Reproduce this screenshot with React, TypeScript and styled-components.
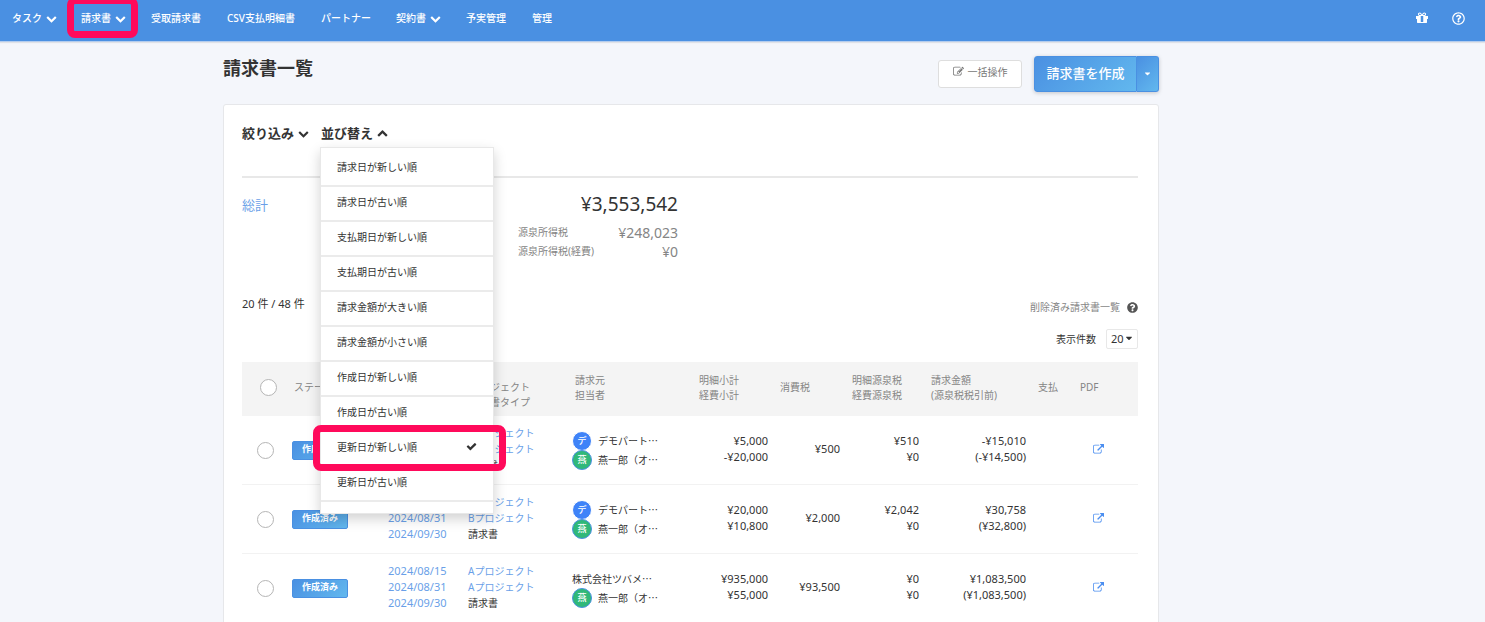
import React from "react";
import styled, { createGlobalStyle } from "styled-components";
import { FaCaretDown, FaQuestionCircle, FaRegQuestionCircle } from "react-icons/fa";

const color = {
  brand: "#4a90e2",
  brandLight: "#62b8ee",
  link: "#6a9fe8",
  text: "#333333",
  muted: "#858585",
  line: "#e8e8e8",
  rowLine: "#f2f2f2",
  page: "#f4f6fb",
  marker: "#ff0a5b",
};

const GlobalStyle = createGlobalStyle`
  *, *::before, *::after { box-sizing: border-box; }
  body {
    margin: 0;
    background: ${color.page};
    color: ${color.text};
    font-family: "Noto Sans", "Noto Sans CJK JP", sans-serif;
    font-size: 10px;
    line-height: 16px;
  }
  button, select { font-family: inherit; }
  a { text-decoration: none; }
  svg { display: block; flex: none; }
`;

const Shell = styled.div`
  display: flex;
  flex-direction: column;
  height: 100vh;
`;

const TopNav = styled.nav`
  display: flex;
  flex: none;
  justify-content: space-between;
  height: 42px;
  padding-bottom: 5px;
  background: ${color.brand};
  border-bottom: 1px solid #b4cdee;
  box-shadow: 0 1px 1px rgba(0, 0, 0, 0.08);
`;

const NavGroup = styled.div`
  display: flex;
  align-items: center;
`;

const NavUtilities = styled(NavGroup)`
  gap: 23px;
  padding-right: 20px;
`;

const NavMenuButton = styled.button`
  position: relative;
  display: flex;
  align-items: center;
  gap: 4px;
  padding: 0 12px;
  border: 0;
  background: none;
  color: #fff;
  font-size: 10px;
  font-weight: 500;
  line-height: 16px;
`;

const NavLink = styled.a`
  padding: 0 13px;
  color: #fff;
  font-weight: 500;
  white-space: nowrap;
`;

const IconLink = styled.a`
  color: #fff;
`;

const Marker = styled.span<{ $top: number; $right: number; $bottom: number; $left: number }>`
  position: absolute;
  z-index: 3;
  top: ${(p) => p.$top}px;
  right: ${(p) => p.$right}px;
  bottom: ${(p) => p.$bottom}px;
  left: ${(p) => p.$left}px;
  border: 7px solid ${color.marker};
  border-radius: 8px;
  pointer-events: none;
`;

const Main = styled.main`
  flex: 1;
  min-height: 0;
  overflow-y: auto;
  scrollbar-width: none;
  padding: 14px 103px 40px 0;
`;

const Container = styled.div`
  width: 100%;
  max-width: 936px;
  margin: 0 auto;
`;

const PageHeader = styled.header`
  display: flex;
  align-items: center;
  justify-content: space-between;
  margin-bottom: 12px;
`;

const PageTitle = styled.h1`
  margin: 0;
  padding-bottom: 12px;
  font-size: 18px;
  font-weight: 700;
  line-height: 24px;
`;

const HeaderActions = styled.div`
  display: flex;
  align-items: center;
  gap: 12px;
`;

const BulkButton = styled.button`
  display: flex;
  align-items: center;
  justify-content: center;
  gap: 4px;
  width: 84px;
  height: 28px;
  padding: 0 0 5px;
  border: 1px solid #dedede;
  border-radius: 3px;
  background: #fff;
  color: #777;
  font-size: 10px;
`;

const SplitButton = styled.div`
  display: flex;
  height: 36px;
  border-radius: 3px;
  box-shadow: 0 1px 4px rgba(0, 0, 0, 0.2);
`;

const gradient = `linear-gradient(135deg, ${color.brand}, ${color.brandLight})`;

const CreateButton = styled.button`
  width: 103px;
  padding: 0 0 4px;
  border: 1px solid ${color.brand};
  border-radius: 3px 0 0 3px;
  background: ${gradient};
  color: #fff;
  font-size: 13px;
  font-weight: 500;
`;

const CreateToggle = styled.button`
  display: flex;
  align-items: center;
  justify-content: center;
  width: 22px;
  padding: 0 0 2px;
  border: 1px solid ${color.brand};
  border-left: 0;
  border-radius: 0 3px 3px 0;
  background: ${gradient};
  color: #fff;
`;

const Card = styled.section`
  padding: 18px 20px 40px 18px;
  border: 1px solid #e6e7ea;
  border-radius: 3px;
  background: #fff;
`;

const FilterBar = styled.div`
  display: flex;
  align-items: flex-start;
  gap: 12px;
  height: 55px;
  border-bottom: 2px solid ${color.line};
`;

const FilterButton = styled.button`
  display: flex;
  align-items: center;
  gap: 4px;
  padding: 0;
  border: 0;
  background: none;
  color: ${color.text};
  font-size: 13px;
  font-weight: 700;
  line-height: 20px;
`;

const SortControl = styled.div`
  position: relative;
`;

const SortMenu = styled.ul`
  position: absolute;
  z-index: 2;
  top: 24px;
  left: -1px;
  width: 174px;
  margin: 0;
  padding: 4px 0 11px;
  border: 1px solid ${color.line};
  background: #fff;
  box-shadow: 0 5px 12px rgba(0, 0, 0, 0.18);
  list-style: none;
`;

const SortItem = styled.li`
  position: relative;
  border-bottom: 2px solid #ebebeb;
`;

const SortOption = styled.button`
  display: flex;
  align-items: center;
  justify-content: space-between;
  width: 100%;
  height: 33px;
  padding: 0 16px 5px;
  border: 0;
  background: none;
  color: ${color.text};
  font-size: 10px;
  text-align: left;
`;

const Totals = styled.div`
  display: flex;
  padding: 13px 0 33px;
`;

const TotalsLink = styled.div`
  width: 276px;
  font-size: 13px;
  line-height: 28px;

  a { color: ${color.link}; }
`;

const TotalsBody = styled.div`
  width: 160px;
  text-align: right;
`;

const GrandTotal = styled.div`
  margin-bottom: 6px;
  font-size: 19px;
  line-height: 26px;
`;

const TaxList = styled.dl`
  display: grid;
  grid-template-columns: auto auto;
  justify-content: space-between;
  margin: 0;
  color: ${color.muted};
  line-height: 19px;

  dt { text-align: left; white-space: nowrap; }
  dd { margin: 0; font-size: 14px; }
`;

const ListMeta = styled.div`
  display: flex;
  justify-content: space-between;
  margin-bottom: 13px;
  line-height: 20px;
`;

const Count = styled.div`
  font-size: 11px;
`;

const MetaRight = styled.div`
  display: flex;
  flex-direction: column;
  align-items: flex-end;
  gap: 12px;
  padding-top: 3px;
`;

const DeletedLink = styled.a`
  display: flex;
  align-items: center;
  gap: 7px;
  color: ${color.muted};
`;

const PageSize = styled.label`
  display: flex;
  align-items: center;
  gap: 10px;
`;

const SelectBox = styled.span`
  position: relative;
  display: block;

  svg {
    position: absolute;
    top: 4px;
    right: 4px;
    pointer-events: none;
  }
`;

const PageSizeSelect = styled.select`
  display: block;
  width: 32px;
  height: 20px;
  padding: 0 0 2px 4px;
  border: 1px solid ${color.line};
  border-radius: 2px;
  appearance: none;
  background: #fff;
  color: ${color.text};
  font-size: 11px;
`;

const InvoiceTable = styled.table`
  width: 100%;
  table-layout: fixed;
  border-collapse: separate;
  border-spacing: 0;
`;

const Col = styled.col<{ $width?: number }>`
  width: ${(p) => (p.$width ? `${p.$width}px` : "auto")};
`;

const HeadCell = styled.th<{ $inset?: number }>`
  height: 54px;
  padding: 0 0 3px ${(p) => p.$inset ?? 12}px;
  background: #f4f4f4;
  color: ${color.muted};
  font-weight: 400;
  line-height: 15px;
  text-align: left;
  white-space: nowrap;
`;

const Cell = styled.td<{ $inset?: number }>`
  height: 69px;
  padding: 0 0 3px ${(p) => p.$inset ?? 12}px;
  border-bottom: 1px solid ${color.rowLine};
  white-space: nowrap;
`;

const ControlCell = styled(Cell)`
  padding-top: 1px;
  padding-bottom: 0;
`;

const NumberCell = styled(Cell)`
  padding-left: 0;
  font-size: 11px;
  text-align: right;
`;

const Line = styled.div<{ $large?: boolean }>`
  height: 16px;
  font-size: ${(p) => (p.$large ? 11 : 10)}px;
  line-height: 16px;

  a { color: ${color.link}; }
`;

const RowCheck = styled.input`
  display: block;
  width: 17px;
  height: 17px;
  margin: 0;
  border: 1px solid #b5b5b5;
  border-radius: 50%;
  appearance: none;
  background: #fff;
`;

const StatusButton = styled.button`
  display: block;
  width: 56px;
  height: 19px;
  padding: 0 0 3px;
  border: 1px solid ${color.brand};
  border-radius: 2px;
  background: ${gradient};
  color: #fff;
  font-size: 9px;
  font-weight: 700;
  line-height: 14px;
`;

const Party = styled.div`
  display: flex;
  align-items: center;
  gap: 6px;
  height: 19px;
  font-family: "Noto Sans CJK JP", sans-serif;
`;

const Avatar = styled.span<{ $staff?: boolean }>`
  width: 20px;
  height: 20px;
  border: 1px solid ${(p) => (p.$staff ? color.brand : "#fff")};
  border-radius: 50%;
  background: ${(p) => (p.$staff ? "#30b879" : "#3f83f8")};
  color: #fff;
  font-size: 9px;
  font-weight: 500;
  line-height: 17px;
  text-align: center;
`;

const PdfLink = styled.a`
  display: inline-block;
  vertical-align: middle;
  color: #4b8ef0;
`;

const glyphs = {
  down: "M1683 808l-742 741q-19 19-45 19t-45-19l-742-741q-19-19-19-45.5t19-45.5l166-165q19-19 45-19t45 19l531 531 531-531q19-19 45-19t45 19l166 165q19 19 19 45.5t-19 45.5z",
  check:
    "M1671 566q0 40-28 68l-724 724-136 136q-28 28-68 28t-68-28l-136-136-362-362q-28-28-28-68t28-68l136-136q28-28 68-28t68 28l294 295 656-657q28-28 68-28t68 28l136 136q28 28 28 68z",
  gift: "M1056 1356v-716h-320v716q0 25 18 38.5t46 13.5h192q28 0 46-13.5t18-38.5zm-456-844h195l-126-161q-26-31-69-31-40 0-68 28t-28 68 28 68 68 28zm688-96q0-40-28-68t-68-28q-43 0-69 31l-125 161h194q40 0 68-28t28-68zm376 256v320q0 14-9 23t-23 9h-96v416q0 40-28 68t-68 28h-1088q-40 0-68-28t-28-68v-416h-96q-14 0-23-9t-9-23v-320q0-14 9-23t23-9h440q-93 0-158.5-65.5t-65.5-158.5 65.5-158.5 158.5-65.5q107 0 168 77l128 165 128-165q61-77 168-77 93 0 158.5 65.5t65.5 158.5-65.5 158.5-158.5 65.5h440q14 0 23 9t9 23z",
  edit: "M888 1184l116-116-152-152-116 116v56h96v96h56zm440-720q-16-16-33 1l-350 350q-17 17-1 33t33-1l350-350q17-17 1-33zm80 594v190q0 119-84.5 203.5t-203.5 84.5h-832q-119 0-203.5-84.5t-84.5-203.5v-832q0-119 84.5-203.5t203.5-84.5h832q63 0 117 25 15 7 18 23 3 17-9 29l-49 49q-14 14-32 8-23-6-45-6h-832q-66 0-113 47t-47 113v832q0 66 47 113t113 47h832q66 0 113-47t47-113v-126q0-13 9-22l64-64q15-15 35-7t20 29zm-96-738l288 288-672 672h-288v-288zm444 132l-92 92-288-288 92-92q28-28 68-28t68 28l152 152q28 28 28 68t-28 68z",
  external:
    "M1408 928v320q0 119-84.5 203.5t-203.5 84.5h-832q-119 0-203.5-84.5t-84.5-203.5v-832q0-119 84.5-203.5t203.5-84.5h704q14 0 23 9t9 23v64q0 14-9 23t-23 9h-704q-66 0-113 47t-47 113v832q0 66 47 113t113 47h832q66 0 113-47t47-113v-320q0-14 9-23t23-9h64q14 0 23 9t9 23zm384-864v512q0 26-19 45t-45 19-45-19l-176-176-652 652q-10 10-23 10t-23-10l-114-114q-10-10-10-23t10-23l652-652-176-176q-19-19-19-45t19-45 45-19h512q26 0 45 19t19 45z",
};

type IconProps = { name: keyof typeof glyphs; size?: number; flip?: boolean };

const Icon = ({ name, size = 11, flip }: IconProps) => (
  <svg width={size} height={size} viewBox="0 0 1792 1792" fill="currentColor" aria-hidden="true">
    <path d={glyphs[name]} transform={flip ? "rotate(180 896 960)" : undefined} />
  </svg>
);

type NavEntry = { label: string; menu?: boolean; marked?: boolean };

const navEntries: NavEntry[] = [
  { label: "タスク", menu: true },
  { label: "請求書", menu: true, marked: true },
  { label: "受取請求書" },
  { label: "CSV支払明細書" },
  { label: "パートナー" },
  { label: "契約書", menu: true },
  { label: "予実管理" },
  { label: "管理" },
];

const sortOptions = [
  "請求日が新しい順",
  "請求日が古い順",
  "支払期日が新しい順",
  "支払期日が古い順",
  "請求金額が大きい順",
  "請求金額が小さい順",
  "作成日が新しい順",
  "作成日が古い順",
  "更新日が新しい順",
  "更新日が古い順",
];
const activeSort = "更新日が新しい順";

type Column = { lines: string[]; width?: number; inset?: number };

const columns: Column[] = [
  { lines: ["ステータス"], width: 96, inset: 14 },
  { lines: ["請求日", "計上日", "支払期日"], width: 80, inset: 14 },
  { lines: ["案件", "プロジェクト", "請求書タイプ"], width: 104, inset: 14 },
  { lines: ["請求元", "担当者"], inset: 15 },
  { lines: ["明細小計", "経費小計"], width: 81 },
  { lines: ["消費税"], width: 72 },
  { lines: ["明細源泉税", "経費源泉税"], width: 79 },
  { lines: ["請求金額", "(源泉税税引前)"], width: 107 },
  { lines: ["支払"], width: 42 },
  { lines: ["PDF"], width: 70 },
];

type Invoice = {
  dates: string[];
  projects: string[];
  company: { name: string; initial?: string };
  subtotal: string[];
  tax: string;
  withholding: string[];
  amount: string[];
};

const invoices: Invoice[] = [
  {
    dates: ["2024/08/15", "2024/08/31", "2024/09/30"],
    projects: ["Aプロジェクト", "Aプロジェクト"],
    company: { name: "デモパート…", initial: "デ" },
    subtotal: ["¥5,000", "-¥20,000"],
    tax: "¥500",
    withholding: ["¥510", "¥0"],
    amount: ["-¥15,010", "(-¥14,500)"],
  },
  {
    dates: ["2024/08/15", "2024/08/31", "2024/09/30"],
    projects: ["Bプロジェクト", "Bプロジェクト"],
    company: { name: "デモパート…", initial: "デ" },
    subtotal: ["¥20,000", "¥10,800"],
    tax: "¥2,000",
    withholding: ["¥2,042", "¥0"],
    amount: ["¥30,758", "(¥32,800)"],
  },
  {
    dates: ["2024/08/15", "2024/08/31", "2024/09/30"],
    projects: ["Aプロジェクト", "Aプロジェクト"],
    company: { name: "株式会社ツバメ…" },
    subtotal: ["¥935,000", "¥55,000"],
    tax: "¥93,500",
    withholding: ["¥0", "¥0"],
    amount: ["¥1,083,500", "(¥1,083,500)"],
  },
];

const NumberLines = ({ values }: { values: string[] }) => (
  <NumberCell>
    {values.map((value, i) => (
      <Line key={i} $large>{value}</Line>
    ))}
  </NumberCell>
);

const InvoiceRow = ({ invoice }: { invoice: Invoice }) => (
  <tr>
    <ControlCell $inset={15}>
      <RowCheck type="checkbox" aria-label="請求書を選択" />
    </ControlCell>
    <ControlCell>
      <StatusButton type="button">作成済み</StatusButton>
    </ControlCell>
    <Cell>
      {invoice.dates.map((date) => (
        <Line key={date} $large><a href="#invoice">{date}</a></Line>
      ))}
    </Cell>
    <Cell>
      {invoice.projects.map((project, i) => (
        <Line key={i}><a href="#project">{project}</a></Line>
      ))}
      <Line>請求書</Line>
    </Cell>
    <ControlCell>
      <Party>
        {invoice.company.initial && <Avatar>{invoice.company.initial}</Avatar>}
        {invoice.company.name}
      </Party>
      <Party>
        <Avatar $staff>燕</Avatar>
        燕一郎（オ…
      </Party>
    </ControlCell>
    <NumberLines values={invoice.subtotal} />
    <NumberLines values={[invoice.tax]} />
    <NumberLines values={invoice.withholding} />
    <NumberLines values={invoice.amount} />
    <Cell />
    <Cell $inset={25}>
      <PdfLink href="#pdf" aria-label="PDFを開く"><Icon name="external" /></PdfLink>
    </Cell>
  </tr>
);

export default function App() {
  return (
    <Shell lang="ja">
      <GlobalStyle />
      <TopNav>
        <NavGroup>
          {navEntries.map((entry) =>
            entry.menu ? (
              <NavMenuButton key={entry.label} type="button">
                {entry.label}
                <Icon name="down" />
                {entry.marked && <Marker $top={-13} $right={0} $bottom={-12} $left={-2} />}
              </NavMenuButton>
            ) : (
              <NavLink key={entry.label} href="#nav">{entry.label}</NavLink>
            )
          )}
        </NavGroup>
        <NavUtilities>
          <IconLink href="#gift" aria-label="お知らせ"><Icon name="gift" size={14} /></IconLink>
          <IconLink href="#help" aria-label="ヘルプ"><FaRegQuestionCircle size={13} /></IconLink>
        </NavUtilities>
      </TopNav>

      <Main>
        <Container>
          <PageHeader>
            <PageTitle>請求書一覧</PageTitle>
            <HeaderActions>
              <BulkButton type="button"><Icon name="edit" />一括操作</BulkButton>
              <SplitButton>
                <CreateButton type="button">請求書を作成</CreateButton>
                <CreateToggle type="button" aria-label="作成メニュー">
                  <FaCaretDown size={9} />
                </CreateToggle>
              </SplitButton>
            </HeaderActions>
          </PageHeader>

          <Card>
            <FilterBar>
              <FilterButton type="button">絞り込み<Icon name="down" /></FilterButton>
              <SortControl>
                <FilterButton type="button" aria-expanded="true">並び替え<Icon name="down" flip /></FilterButton>
                <SortMenu>
                  {sortOptions.map((option) => (
                    <SortItem key={option}>
                      <SortOption type="button">
                        {option}
                        {option === activeSort && <Icon name="check" />}
                      </SortOption>
                      {option === activeSort && <Marker $top={-7} $right={-13} $bottom={-6} $left={-8} />}
                    </SortItem>
                  ))}
                </SortMenu>
              </SortControl>
            </FilterBar>

            <Totals>
              <TotalsLink><a href="#total">総計</a></TotalsLink>
              <TotalsBody>
                <GrandTotal>¥3,553,542</GrandTotal>
                <TaxList>
                  <dt>源泉所得税</dt>
                  <dd>¥248,023</dd>
                  <dt>源泉所得税(経費)</dt>
                  <dd>¥0</dd>
                </TaxList>
              </TotalsBody>
            </Totals>

            <ListMeta>
              <Count>20 件 / 48 件</Count>
              <MetaRight>
                <DeletedLink href="#deleted">削除済み請求書一覧<FaQuestionCircle size={11} color="#555" /></DeletedLink>
                <PageSize>
                  表示件数
                  <SelectBox>
                    <PageSizeSelect defaultValue="20">
                      <option value="20">20</option>
                      <option value="50">50</option>
                    </PageSizeSelect>
                    <FaCaretDown size={10} />
                  </SelectBox>
                </PageSize>
              </MetaRight>
            </ListMeta>

            <InvoiceTable>
              <colgroup>
                <Col $width={38} />
                {columns.map((column) => (
                  <Col key={column.lines[0]} $width={column.width} />
                ))}
              </colgroup>
              <thead>
                <tr>
                  <HeadCell $inset={18}>
                    <RowCheck type="checkbox" aria-label="すべて選択" />
                  </HeadCell>
                  {columns.map((column) => (
                    <HeadCell key={column.lines[0]} $inset={column.inset}>
                      {column.lines.map((line) => (
                        <div key={line}>{line}</div>
                      ))}
                    </HeadCell>
                  ))}
                </tr>
              </thead>
              <tbody>
                {invoices.map((invoice, i) => (
                  <InvoiceRow key={i} invoice={invoice} />
                ))}
              </tbody>
            </InvoiceTable>
          </Card>
        </Container>
      </Main>
    </Shell>
  );
}
